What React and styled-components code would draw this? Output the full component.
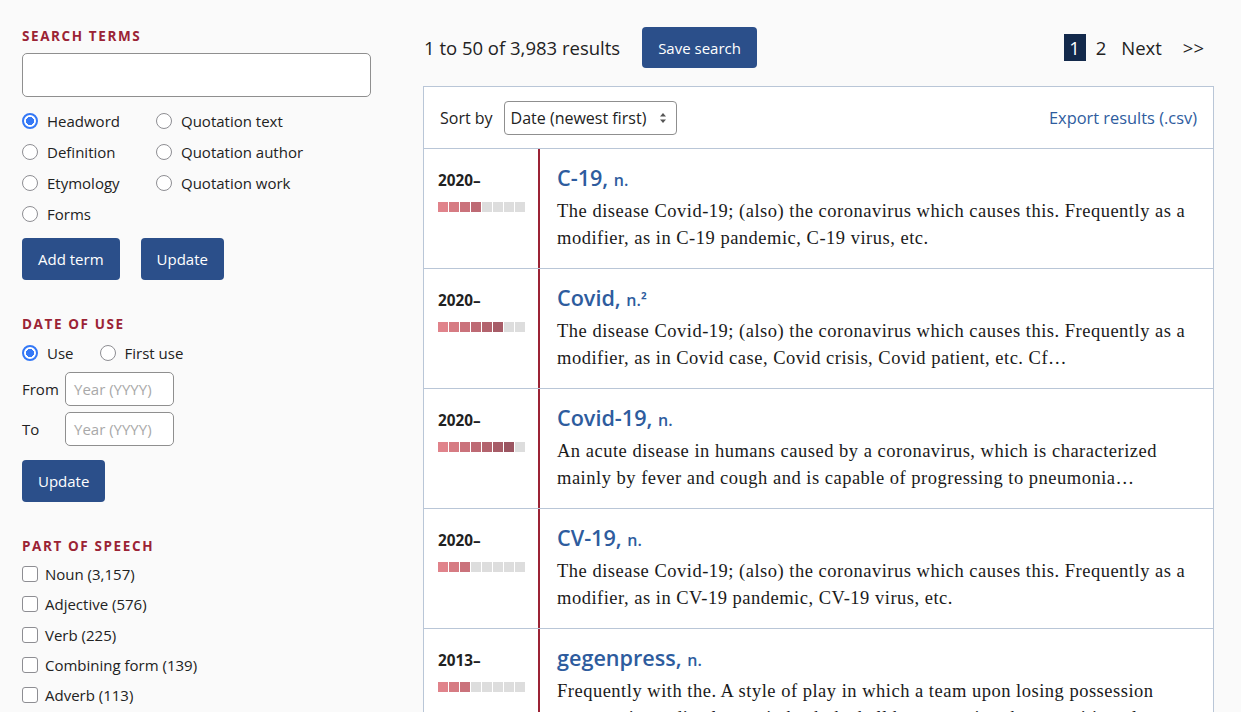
import React from "react"
import styled, { createGlobalStyle } from "styled-components"

const GlobalStyle = createGlobalStyle`
  body {
    margin: 0;
    background: #fafafa;
    font-family: "Open Sans", "Noto Sans", sans-serif;
    color: #222;
  }
`

const BLUE_BTN = "#2b4f8a"
const RED = "#9b2335"
const LINK = "#2e5c9e"
const LINE = "#b9c6d7"

const BAR_COLOURS = ["#e0838b", "#d67b83", "#ca727b", "#be6a74", "#b3636d", "#a75c67", "#9b5561", "#8f4e5a"]

const Page = styled.div`
  display: flex;
  padding: 27px 0 0 22px;
  gap: 52px;
  height: 685px;
  overflow: hidden;
`

const Sidebar = styled.aside`
  width: 349px;
  flex-shrink: 0;
  display: flex;
  flex-direction: column;
`

const Heading = styled.h3`
  margin: ${(p) => p.$top || 0}px 0 0;
  font-size: 13.5px;
  line-height: 18px;
  font-weight: 700;
  letter-spacing: 1.6px;
  color: ${RED};
  text-transform: uppercase;
`

const SearchBox = styled.div`
  margin-top: 8px;
  height: 44px;
  border: 1px solid #8f8f8f;
  border-radius: 5px;
  background: #fff;
  box-sizing: border-box;
`

const RadioGrid = styled.div`
  display: grid;
  grid-template-columns: 134px 1fr;
  margin-top: 8px;
`

const RadioRow = styled.div`
  display: flex;
  gap: ${(p) => p.$gap || 0}px;
  margin-top: 4px;
`

const Option = styled.label`
  display: flex;
  align-items: center;
  height: 31px;
  font-size: 15px;
  color: #222;
  gap: 9px;
`

const RadioDot = styled.span`
  width: 16px;
  height: 16px;
  border-radius: 50%;
  box-sizing: border-box;
  border: ${(p) => (p.$on ? "2px solid #3478f6" : "1.5px solid #8e8e93")};
  background: ${(p) => (p.$on ? "radial-gradient(circle, #3478f6 0 3.8px, #fff 4.3px)" : "#fff")};
  flex-shrink: 0;
`

const Check = styled.span`
  width: 16px;
  height: 16px;
  border-radius: 3px;
  box-sizing: border-box;
  border: 1.5px solid #8e8e93;
  background: #fff;
  flex-shrink: 0;
`

const CheckList = styled.div`
  margin-top: 4px;
  display: flex;
  flex-direction: column;

  ${Option} {
    height: 30.25px;
    gap: 7px;
  }
`

const ButtonRow = styled.div`
  display: flex;
  gap: 21px;
  margin-top: ${(p) => p.$top || 0}px;
`

const Button = styled.button`
  height: ${(p) => p.$h || 42}px;
  padding: 0 16px;
  border: none;
  border-radius: 4px;
  background: ${BLUE_BTN};
  color: #fff;
  font-family: "Open Sans", sans-serif;
  font-size: 15px;
  cursor: pointer;
`

const YearRow = styled.div`
  display: flex;
  align-items: center;
  margin-top: ${(p) => p.$top}px;
`

const YearLabel = styled.span`
  width: 43px;
  font-size: 15px;
`

const YearBox = styled.div`
  width: 109px;
  height: 34px;
  border: 1px solid #8f8f8f;
  border-radius: 5px;
  background: #fff;
  box-sizing: border-box;
  padding-left: 8px;
  display: flex;
  align-items: center;
  font-size: 15px;
  color: #a9a9a9;
`

const Main = styled.main`
  width: 791px;
  flex-shrink: 0;
  display: flex;
  flex-direction: column;
`

const TopBar = styled.div`
  display: flex;
  align-items: center;
  height: 41px;
  margin-bottom: 18px;
`

const Count = styled.span`
  font-size: 18.5px;
  margin: 0 22px 0 1px;
`

const Pager = styled.nav`
  margin-left: auto;
  margin-right: 10px;
  display: flex;
  align-items: center;
  font-size: 18.5px;
`

const PageLink = styled.span`
  margin-left: ${(p) => p.$gap || 0}px;
  ${(p) =>
    p.$current &&
    `
    background: #13294b;
    color: #fff;
    width: 22px;
    height: 27px;
    display: flex;
    align-items: center;
    justify-content: center;
  `}
`

const Panel = styled.section`
  background: #fff;
  border: 1px solid ${LINE};
`

const SortRow = styled.div`
  display: flex;
  align-items: center;
  height: 61px;
  padding: 0 16px;
  font-size: 16px;
`

const SortLabel = styled.span`
  margin-right: 11px;
`

const Select = styled.div`
  width: 173px;
  height: 34px;
  box-sizing: border-box;
  border: 1px solid #8f8f8f;
  border-radius: 4px;
  display: flex;
  align-items: center;
  justify-content: space-between;
  padding: 0 9px 0 6px;
`

const ExportLink = styled.a`
  margin-left: auto;
  font-size: 16.4px;
  color: ${LINK};
  text-decoration: none;
`

const EntryRow = styled.article`
  display: flex;
  height: 120px;
  border-top: 1px solid ${LINE};
  box-sizing: border-box;
`

const DateCol = styled.div`
  width: 114px;
  padding: 21px 0 0 14px;
  box-sizing: border-box;
  flex-shrink: 0;
`

const DateText = styled.div`
  font-size: 15.3px;
  font-weight: 700;
  line-height: 20px;
`

const Bar = styled.div`
  display: flex;
  gap: 1px;
  margin-top: 12px;
`

const Cell = styled.span`
  width: 10px;
  height: 10px;
  background: ${(p) => p.$c};
`

const Body = styled.div`
  flex: 1;
  border-left: 2px solid ${RED};
  padding: 12px 14px 0 17px;
`

const Headword = styled.h2`
  margin: 0;
  font-size: 21.6px;
  line-height: 34px;
  font-weight: 600;
  color: ${LINK};
`

const Pos = styled.span`
  font-size: 16px;
`

const Definition = styled.p`
  margin: 1px 0 0;
  font-family: "Liberation Serif", serif;
  font-size: 18.5px;
  letter-spacing: 0.5px;
  line-height: 27px;
  color: #1a1a1a;
`

const entries = [
  {
    date: "2020–",
    level: 4,
    word: "C-19,",
    pos: "n.",
    def: "The disease Covid-19; (also) the coronavirus which causes this. Frequently as a modifier, as in C-19 pandemic, C-19 virus, etc.",
  },
  {
    date: "2020–",
    level: 6,
    word: "Covid,",
    pos: "n.²",
    def: "The disease Covid-19; (also) the coronavirus which causes this. Frequently as a modifier, as in Covid case, Covid crisis, Covid patient, etc. Cf…",
  },
  {
    date: "2020–",
    level: 7,
    word: "Covid-19,",
    pos: "n.",
    def: "An acute disease in humans caused by a coronavirus, which is characterized mainly by fever and cough and is capable of progressing to pneumonia…",
  },
  {
    date: "2020–",
    level: 3,
    word: "CV-19,",
    pos: "n.",
    def: "The disease Covid-19; (also) the coronavirus which causes this. Frequently as a modifier, as in CV-19 pandemic, CV-19 virus, etc.",
  },
  {
    date: "2013–",
    level: 3,
    word: "gegenpress,",
    pos: "n.",
    def: "Frequently with the. A style of play in which a team upon losing possession attempts immediately to win back the ball by pressuring the opposition player who has it…",
  },
]

const Radio = ({ on, children }) => (
  <Option>
    <RadioDot $on={on} />
    {children}
  </Option>
)

const CheckItem = ({ children }) => (
  <Option>
    <Check />
    {children}
  </Option>
)

const SelectArrows = () => (
  <svg width="8" height="12" viewBox="0 0 8 12">
    <path d="M4 1 L7 4.6 H1 Z" fill="#555" />
    <path d="M4 11 L7 7.4 H1 Z" fill="#555" />
  </svg>
)

const UsageBar = ({ level }) => (
  <Bar>
    {BAR_COLOURS.map((c, i) => (
      <Cell key={i} $c={i < level ? c : "#dddddd"} />
    ))}
  </Bar>
)

export default function App() {
  return (
    <>
      <GlobalStyle />
      <Page>
        <Sidebar>
          <Heading>Search terms</Heading>
          <SearchBox />
          <RadioGrid>
            <Radio on>Headword</Radio>
            <Radio>Quotation text</Radio>
            <Radio>Definition</Radio>
            <Radio>Quotation author</Radio>
            <Radio>Etymology</Radio>
            <Radio>Quotation work</Radio>
            <Radio>Forms</Radio>
          </RadioGrid>
          <ButtonRow $top={9}>
            <Button>Add term</Button>
            <Button>Update</Button>
          </ButtonRow>

          <Heading $top={35}>Date of use</Heading>
          <RadioRow $gap={26}>
            <Radio on>Use</Radio>
            <Radio>First use</Radio>
          </RadioRow>
          <YearRow $top={4}>
            <YearLabel>From</YearLabel>
            <YearBox>Year (YYYY)</YearBox>
          </YearRow>
          <YearRow $top={6}>
            <YearLabel>To</YearLabel>
            <YearBox>Year (YYYY)</YearBox>
          </YearRow>
          <ButtonRow $top={14}>
            <Button>Update</Button>
          </ButtonRow>

          <Heading $top={35}>Part of speech</Heading>
          <CheckList>
            <CheckItem>Noun (3,157)</CheckItem>
            <CheckItem>Adjective (576)</CheckItem>
            <CheckItem>Verb (225)</CheckItem>
            <CheckItem>Combining form (139)</CheckItem>
            <CheckItem>Adverb (113)</CheckItem>
          </CheckList>
        </Sidebar>

        <Main>
          <TopBar>
            <Count>1 to 50 of 3,983 results</Count>
            <Button $h={41}>Save search</Button>
            <Pager>
              <PageLink $current>1</PageLink>
              <PageLink $gap={10}>2</PageLink>
              <PageLink $gap={15}>Next</PageLink>
              <PageLink $gap={21}>&gt;&gt;</PageLink>
            </Pager>
          </TopBar>
          <Panel>
            <SortRow>
              <SortLabel>Sort by</SortLabel>
              <Select>
                Date (newest first)
                <SelectArrows />
              </Select>
              <ExportLink href="#">Export results (.csv)</ExportLink>
            </SortRow>
            {entries.map((e) => (
              <EntryRow key={e.word}>
                <DateCol>
                  <DateText>{e.date}</DateText>
                  <UsageBar level={e.level} />
                </DateCol>
                <Body>
                  <Headword>
                    {e.word} <Pos>{e.pos}</Pos>
                  </Headword>
                  <Definition>{e.def}</Definition>
                </Body>
              </EntryRow>
            ))}
          </Panel>
        </Main>
      </Page>
    </>
  )
}
